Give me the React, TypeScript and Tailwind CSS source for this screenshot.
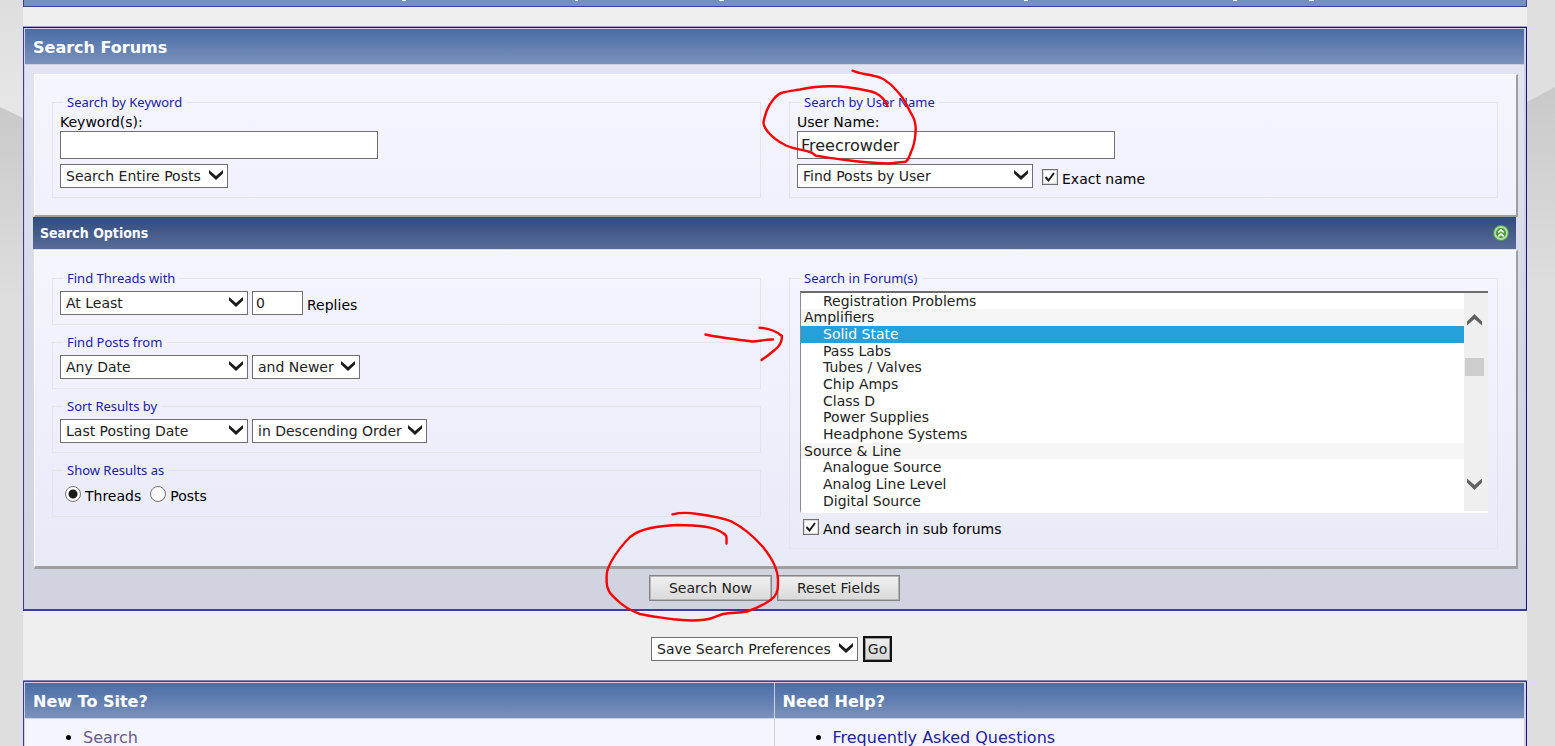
import { ReactNode, useState } from 'react';

const forums = [
  { name: 'Registration Problems' },
  { name: 'Amplifiers', group: true },
  { name: 'Solid State' },
  { name: 'Pass Labs' },
  { name: 'Tubes / Valves' },
  { name: 'Chip Amps' },
  { name: 'Class D' },
  { name: 'Power Supplies' },
  { name: 'Headphone Systems' },
  { name: 'Source & Line', group: true },
  { name: 'Analogue Source' },
  { name: 'Analog Line Level' },
  { name: 'Digital Source' },
];

function Select({ label, width, options }: { label: string; width: string; options: string[] }) {
  return (
    <span className={`relative block ${width}`}>
      <select
        aria-label={label}
        className="block h-6 w-full appearance-none border border-[#707070] bg-white pr-6 pl-[5px] text-sm leading-5 text-[#222]"
      >
        {options.map((o) => <option key={o}>{o}</option>)}
      </select>
      <svg className="pointer-events-none absolute top-[6px] right-[5px]" width="14" height="10" viewBox="0 0 14 10">
        <path d="M0 0 L7 6 L14 0 V3.500 L7 10 L0 3.500 Z" fill="#1c1c1c" />
      </svg>
    </span>
  );
}

function Fieldset({ legend, children, className = '' }: { legend: string; children: ReactNode; className?: string }) {
  return (
    <fieldset className={`min-w-0 border border-[#e4e5e6] px-[7px] pb-[9px] ${className}`}>
      <legend className="ml-[3px] px-1 font-['Noto_Sans',Tahoma,sans-serif] text-[13px] leading-4 text-[#22229c]">
        {legend}
      </legend>
      {children}
    </fieldset>
  );
}

function Check({ id, label }: { id: string; label: string }) {
  return (
    <div className="flex items-start gap-1">
      <span className="relative block size-4">
        <input
          id={id}
          type="checkbox"
          defaultChecked
          className="peer block size-4 appearance-none border border-[#707070] bg-white shadow-[inset_0_0_0_1px_#ddd]"
        />
        <svg className="pointer-events-none absolute inset-0 hidden peer-checked:block" width="16" height="16" viewBox="0 0 16 16">
          <path d="M3.500 8 L6.500 11.500 L12 4" fill="none" stroke="#1c1c1c" strokeWidth="2" />
        </svg>
      </span>
      <label htmlFor={id} className="pt-px text-sm leading-[18px]">{label}</label>
    </div>
  );
}

function Radio({ id, label, checked, onChange }: { id: string; label: string; checked: boolean; onChange: () => void }) {
  return (
    <div className="flex items-start gap-1">
      <input
        id={id}
        type="radio"
        name="showposts"
        checked={checked}
        onChange={onChange}
        className="block size-4 appearance-none rounded-full border border-[#707070] bg-white checked:bg-[radial-gradient(circle,#1c1c1c_0_4px,#fff_5px)]"
      />
      <label htmlFor={id} className="pt-px text-sm leading-[18px]">{label}</label>
    </div>
  );
}

function FormButton({ children }: { children: ReactNode }) {
  return (
    <button
      type="button"
      className="h-[26px] w-[123px] border border-[#858585] bg-linear-to-b from-[#f0f0f0] to-[#dadada] text-sm leading-5 text-[#222] shadow-[inset_0_0_0_1px_#b4b4b4]"
    >
      {children}
    </button>
  );
}

function Annotations() {
  return (
    <svg
      className="pointer-events-none absolute top-0 left-0"
      width="1555"
      height="746"
      fill="none"
      stroke="#f00"
      strokeWidth="2.4"
      strokeLinecap="round"
      strokeLinejoin="round"
    >
      <path d="M852.5 70.7C862 75 871 74 881 78C889 81 895 88 902 97C906 103 909 110 912 115C915 120 915.700 124 915.700 129C915.500 137 914.500 145 911 152C909 157 908 162 904 162C898 162 893 163.700 888 163.500C873 163 860 162 846 160C836 159 825 157 816 155.700C813 154 813 152.500 810 152C802 149.500 794 149 786 145.500C779 142 773 138 768 132C765 128 763 125 763.500 122C764.500 117 766 113 767 110C770 103 776 94 783 92.500C788 91 794 90.500 800 89.500C810 87.500 820 86.300 829 86.300C843 86 856 88 869 91C878 92.500 885 99 887.500 106" />
      <path d="M705.500 334.500C721 338 736 339 752 341.500C759 341.500 766 339 773 339.500" />
      <path d="M759.500 327.700C768 328 776 331 782 336C782 343 779 347 774 350.500C770 354 766 357 761.500 360" />
      <path d="M672.500 514.300C680 512.500 688 512.500 696 513.800C709 515.500 722 517.500 732 521.700C746 529 756 539 763 547C771 557 778 568 778 580C778 587 778 593 774 597C767 604 757 608 747 611.500C739 613 731 612.500 723 614C717 615.500 713 619 706 619.500C695 621 683 620.500 673 619.300C662 617.500 651 616.500 640 614C630 610.500 623 606 617 600C610 594 606 589 606.700 580C606 572 608 568 611 562C616 553 623 544 630 537C641 528 659 526 677 525C688 525.500 699 525 710 527.700C717 529.500 723 532 726.300 536C726.700 539 726.500 541 726.500 543.500" />
    </svg>
  );
}

const panel = 'ml-px -mr-0.5 grid grid-cols-2 gap-x-7 border-t border-r-2 border-l border-t-white border-r-[#9f9f9f] border-b-[#9f9f9f] border-l-white bg-linear-to-b from-[#f5f5ff] pt-[19px] pr-[18px] pb-[17px] pl-[17px]';
const heading = 'h-[36px] border-b border-[#d0d0e0] bg-linear-to-b from-[#4a6ca6] to-[#7b92bb] pl-2 text-left text-base leading-[37px] font-bold text-white';

export default function App() {
  const [show, setShow] = useState('threads');
  const [forum, setForum] = useState(['Solid State']);

  return (
    <div className="relative flex h-screen overflow-hidden bg-[#dedede] font-['DejaVu_Sans',Verdana,sans-serif] text-sm text-black">
      <div className="w-[23px] shrink-0 bg-linear-to-b from-[#dedede] to-[#e6e6e6] to-[100px]">
        <svg className="block" width="23" height="746">
          <defs>
            <linearGradient id="shade" x1="0" y1="0" x2="0" y2="1">
              <stop offset="0" stopColor="#c9c9c9" />
              <stop offset="0.3" stopColor="#dedede" />
            </linearGradient>
          </defs>
          <path d="M0 107 L23 118 V746 H0 Z" fill="url(#shade)" />
        </svg>
      </div>

      <main className="min-w-0 flex-1 bg-[#efefef]">
        {/* bottom edge of the nav bar */}
        <div className="h-[7px] border-r border-b border-l border-[#3c3ca4] bg-[#7390bf]">
          <svg className="block" width="1400" height="1" fill="#fff">
            <path d="M378 0h4v1h-4zM551 0h3v1h-3zM695 0h5v1h-5zM1000 0h4v1h-4zM1209 0h4v1h-4zM1285 0h5v1h-5z" />
          </svg>
        </div>

        <form className="mt-[19px] border-t border-[#a4a4cc]">
          <div className="border border-b-2 border-[#3c3c9c] border-t-[#12127c] border-r-[#12128c]">
            <div className="border-t border-r-2 border-l border-[#d0d0e0]">
              <h2 className={heading}>Search Forums</h2>
              <div className="bg-linear-to-b from-[#e1e4f2] via-[#d5d8e6] to-[#d1d3e0] px-2 pt-[9px]">
                <div className={`${panel} border-b-2 to-[#f1f1fd]`}>
                  <Fieldset legend="Search by Keyword" className="pt-[3px]">
                    <label htmlFor="keyword" className="block leading-[18px]">Keyword(s):</label>
                    <input
                      id="keyword"
                      className="mb-[5px] block h-7 w-[318px] border border-[#707070] bg-white px-[3px] text-base text-[#222]"
                    />
                    <Select label="Search in" width="w-[168px]" options={['Search Entire Posts', 'Search Titles Only']} />
                  </Fieldset>
                  <Fieldset legend="Search by User Name" className="pt-[3px]">
                    <label htmlFor="username" className="block leading-[18px]">User Name:</label>
                    <input
                      id="username"
                      defaultValue="Freecrowder"
                      className="mb-[5px] block h-7 w-[318px] border border-[#707070] bg-white px-[3px] text-base text-[#222]"
                    />
                    <div className="flex items-end gap-[9px]">
                      <Select label="Find" width="w-[236px]" options={['Find Posts by User', 'Find Threads Started by User']} />
                      <Check id="exact" label="Exact name" />
                    </div>
                  </Fieldset>
                </div>

                <div className="mb-px flex h-8 items-center justify-between bg-linear-to-b from-[#2f4b7e] to-[#5a6c98] pr-[7px] pl-[7px]">
                  <h3 className="font-['DejaVu_Sans_Condensed','DejaVu_Sans',sans-serif] text-sm font-bold text-white">Search Options</h3>
                  <button type="button" aria-label="Collapse">
                    <svg className="block" width="16" height="16" viewBox="0 0 16 16" fill="none">
                      <circle cx="8" cy="8" r="8" fill="#4f9a43" />
                      <circle cx="8" cy="8" r="6" fill="#4a953d" stroke="#b5dbab" strokeWidth="1.800" />
                      <path d="M5.300 7.500 L8 5 L10.700 7.500 M5.300 11.300 L8 8.800 L10.700 11.300" stroke="#fff" strokeWidth="1.700" />
                    </svg>
                  </button>
                </div>

                <div className={`${panel} border-b-3 to-[#e9eaf8]`}>
                  <div className="flex flex-col gap-[9px]">
                    <Fieldset legend="Find Threads with" className="pt-[5px]">
                      <div className="flex gap-1">
                        <Select label="Reply limit" width="w-[188px]" options={['At Least', 'At Most']} />
                        <input
                          id="replies"
                          defaultValue="0"
                          className="h-6 w-[51px] border border-[#707070] bg-white px-[3px] text-sm text-[#222]"
                        />
                        <label htmlFor="replies" className="pt-1 leading-5">Replies</label>
                      </div>
                    </Fieldset>
                    <Fieldset legend="Find Posts from" className="pt-[5px]">
                      <div className="flex gap-1">
                        <Select label="Date" width="w-[188px]" options={['Any Date', 'Your last visit', 'Yesterday']} />
                        <Select label="Before or after" width="w-[108px]" options={['and Newer', 'and Older']} />
                      </div>
                    </Fieldset>
                    <Fieldset legend="Sort Results by" className="pt-[5px]">
                      <div className="flex gap-1">
                        <Select label="Sort by" width="w-[188px]" options={['Last Posting Date', 'Title', 'Forum']} />
                        <Select label="Order" width="w-[175px]" options={['in Descending Order', 'in Ascending Order']} />
                      </div>
                    </Fieldset>
                    <Fieldset legend="Show Results as" className="pt-[5px]">
                      <div className="flex h-6 items-center gap-[9px] pl-[5px]">
                        <Radio id="threads" label="Threads" checked={show === 'threads'} onChange={() => setShow('threads')} />
                        <Radio id="posts" label="Posts" checked={show === 'posts'} onChange={() => setShow('posts')} />
                      </div>
                    </Fieldset>
                  </div>

                  <Fieldset legend="Search in Forum(s)" className="pt-[5px]">
                    <div className="mr-[2px] ml-[3px] flex h-[222px] border-t-2 border-b-2 border-l border-t-[#6c6c6c] border-b-white border-l-[#8a8a8a] bg-white">
                      <select
                        multiple
                        aria-label="Forums"
                        value={forum}
                        onChange={(e) => setForum([...e.target.selectedOptions].map((o) => o.value))}
                        className="block h-full min-w-0 flex-1 overflow-hidden bg-white p-0 text-sm [scrollbar-width:none]"
                      >
                        {forums.map((f, i) => (
                          <option
                            key={f.name}
                            value={f.name}
                            className={`min-h-0 py-0 leading-[18px] text-[#222] checked:bg-[#26a0da] checked:bg-linear-to-b checked:from-[#26a0da] checked:to-[#26a0da] checked:text-white! ${i % 3 === 0 ? 'h-4' : 'h-[17px]'} ${f.group ? 'bg-[#f6f6f6] pl-[3px]' : 'pl-[22px]'}`}
                          >
                            {f.name}
                          </option>
                        ))}
                      </select>
                      <div className="flex w-6 flex-col items-start bg-[#efefef] pt-[21px] pr-1 pb-[21px] pl-px">
                        <svg className="ml-[2px] block" width="15" height="12" viewBox="0 0 15 12">
                          <path d="M0 11.500 V7.500 L7.500 0 L15 7.500 V11.500 L7.500 5 Z" fill="#606060" />
                        </svg>
                        <div className="mt-8 h-[18px] w-[19px] bg-[#cdcdcd]" />
                        <svg className="mt-auto ml-[2px] block" width="15" height="12" viewBox="0 0 15 12">
                          <path d="M0 0.500 V4.500 L7.500 12 L15 4.500 V0.500 L7.500 7 Z" fill="#606060" />
                        </svg>
                      </div>
                    </div>
                    <div className="mt-[6px] mb-1 ml-[6px] h-4">
                      <Check id="subforums" label="And search in sub forums" />
                    </div>
                  </Fieldset>
                </div>

                <div className="flex h-10 justify-center gap-[5px] pt-[6px]">
                  <FormButton>Search Now</FormButton>
                  <FormButton>Reset Fields</FormButton>
                </div>
              </div>
            </div>
          </div>
        </form>

        <div className="flex items-center justify-center gap-[5px] pt-[25px] pr-[7px] pb-[18px]">
          <Select label="Preferences" width="w-[207px]" options={['Save Search Preferences', 'Clear Search Preferences']} />
          <button
            type="button"
            className="h-[26px] w-[29px] border-2 border-[#111] bg-linear-to-b from-[#f0f0f0] to-[#d6d6d6] text-sm leading-5 text-[#222] shadow-[inset_0_0_0_1px_#999]"
          >
            Go
          </button>
        </div>

        <div className="border-t border-[#8080b8]">
          <div className="border border-[#3c3c9c] border-r-[#12128c]">
            <div className="grid grid-cols-2 border-t border-r-2 border-l border-[#d0d0e0] bg-[#f5f5ff] text-base">
              <section className="border-r border-[#d0d0e0]">
                <h2 className={heading}>New To Site?</h2>
                <ul className="list-disc pt-[7px] pb-6 pl-[58px]">
                  <li><a href="#search" className="text-[#6a5a8a]">Search</a></li>
                </ul>
              </section>
              <section>
                <h2 className={heading}>Need Help?</h2>
                <ul className="list-disc pt-[7px] pb-6 pl-[58px]">
                  <li><a href="#faq" className="text-[#22229c]">Frequently Asked Questions</a></li>
                </ul>
              </section>
            </div>
          </div>
        </div>
      </main>

      <div className="w-7 shrink-0 bg-[#dfdfdf]">
        <svg className="block" width="28" height="746">
          <path d="M0 102 L28 87 V746 H0 Z" fill="url(#shade)" />
        </svg>
      </div>

      <Annotations />
    </div>
  );
}
